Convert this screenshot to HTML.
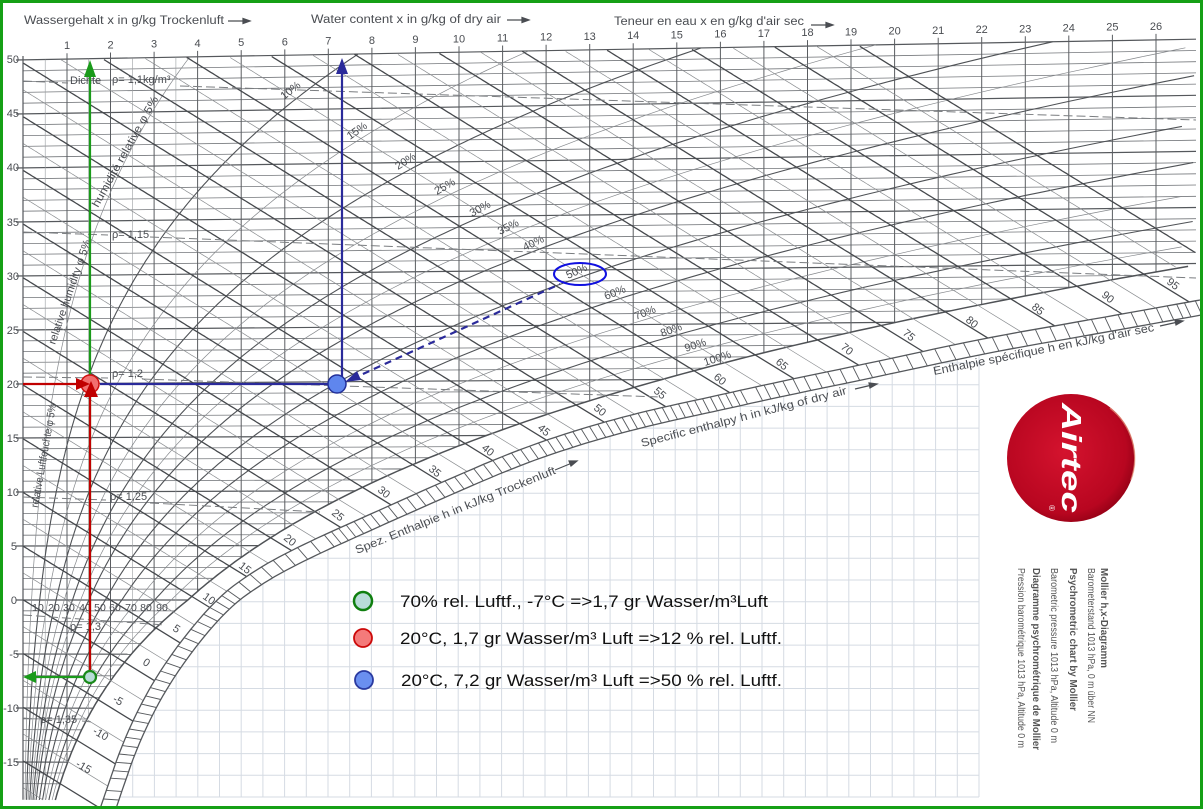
<!DOCTYPE html>
<html><head><meta charset="utf-8">
<style>
html,body{margin:0;padding:0;background:#fff;}
svg{display:block;}
.t{font-family:"Liberation Sans",sans-serif;fill:#4a4d52;}
.lg{font-family:"Liberation Sans",sans-serif;fill:#111;font-size:16.5px;}
</style></head><body>
<svg id="s" width="1203" height="809" viewBox="0 0 1203 809" xmlns="http://www.w3.org/2000/svg">
<defs>
<radialGradient id="rg" cx="0.45" cy="0.45" r="0.6">
<stop offset="0" stop-color="#d4132e"/><stop offset="0.8" stop-color="#b80620"/><stop offset="1" stop-color="#8e0014"/>
</radialGradient>
<clipPath id="gp"><polygon id="gpoly" points="0,0"/></clipPath>
</defs>
<rect x="0" y="0" width="1203" height="809" fill="#fff"/>
<g id="paper" clip-path="url(#gp)" stroke="#d5dbe3" stroke-width="1"></g>
<g id="grid" fill="none"></g>
<g id="band" fill="none" stroke="#55585c"></g>

<g stroke="#7a7d80" stroke-width="1" stroke-dasharray="9 4" fill="none">
<path d="M23,81 L68,83 M180,86 L1196,120"/>
<path d="M23,232 L108,235 M150,237 L1196,278"/>
<path d="M23,377 L108,378 M142,379 L660,397"/>
<path d="M23,497 L106,500 M150,503 L320,512"/>
<path d="M23,615 L165,625"/>
<path d="M23,718 L36,719 M82,721 L92,722"/>
</g>

<g class="t" font-size="11.5">
<text x="24" y="24" textLength="200" lengthAdjust="spacingAndGlyphs">Wassergehalt x in g/kg Trockenluft</text>
<text x="311" y="23" textLength="190" lengthAdjust="spacingAndGlyphs">Water content x in g/kg of dry air</text>
<text x="614" y="25" textLength="190" lengthAdjust="spacingAndGlyphs">Teneur en eau x en g/kg d'air sec</text>
</g>
<g stroke="#4a4d52" stroke-width="1.2" fill="#4a4d52">
<path d="M228,21 h18"/><polygon points="250,21 243,18.5 243,23.5"/>
<path d="M507,20 h18"/><polygon points="529,20 522,17.5 522,22.5"/>
<path d="M811,25 h18"/><polygon points="833,25 826,22.5 826,27.5"/>
</g>
<g class="t" font-size="11" text-anchor="middle" id="toplab"></g>
<g class="t" font-size="11" text-anchor="end">
<text x="19" y="63">50</text><text x="19" y="117">45</text><text x="19" y="171">40</text><text x="19" y="226">35</text>
<text x="19" y="280">30</text><text x="19" y="334">25</text><text x="19" y="388">20</text><text x="19" y="442">15</text>
<text x="19" y="496">10</text><text x="17" y="550">5</text><text x="17" y="604">0</text><text x="19" y="658">-5</text>
<text x="19" y="712">-10</text><text x="19" y="766">-15</text>
</g>

<g class="t" font-size="11">
<text x="70" y="84">Dichte</text><text x="112" y="83">ρ= 1,1kg/m³</text>
<text x="112" y="238">ρ= 1,15</text>
<text x="112" y="377">ρ= 1,2</text>
<text x="110" y="500">ρ= 1,25</text>
<text x="70" y="630">ρ= 1,3</text>
<text x="40" y="723">ρ= 1,35</text>
</g>
<g class="t" font-size="10.5" text-anchor="middle">
<text x="38" y="611">10</text><text x="54" y="611">20</text><text x="69" y="611">30</text><text x="85" y="611">40</text>
<text x="100" y="611">50</text><text x="115" y="611">60</text><text x="131" y="611">70</text><text x="146" y="611">80</text><text x="162" y="611">90</text>
</g>

<g class="t" font-size="11">
<text transform="translate(284,100) rotate(-38)">10%</text>
<text transform="translate(350,140) rotate(-35)">15%</text>
<text transform="translate(398,170) rotate(-32)">20%</text>
<text transform="translate(437,195) rotate(-30)">25%</text>
<text transform="translate(472,217) rotate(-28)">30%</text>
<text transform="translate(500,235) rotate(-27)">35%</text>
<text transform="translate(525,251) rotate(-26)">40%</text>
<text transform="translate(568,279) rotate(-24)">50%</text>
<text transform="translate(606,300) rotate(-22)">60%</text>
<text transform="translate(636,320) rotate(-21)">70%</text>
<text transform="translate(662,337) rotate(-20)">80%</text>
<text transform="translate(686,352) rotate(-19)">90%</text>
<text transform="translate(705,366) rotate(-18)">100%</text>
<text transform="translate(38,508) rotate(-80)" textLength="105" lengthAdjust="spacingAndGlyphs">relative Luftfeuchte φ 5%</text>
<text transform="translate(55,345) rotate(-71)" textLength="110" lengthAdjust="spacingAndGlyphs">relative humidity φ 5%</text>
<text transform="translate(98,208) rotate(-61)" textLength="125" lengthAdjust="spacingAndGlyphs">humidité relative φ 5%</text>
</g>

<g class="t" font-size="11">
<text transform="translate(1166,283) rotate(38)">95</text>
<text transform="translate(1101,296) rotate(40)">90</text>
<text transform="translate(1031,308) rotate(40)">85</text>
<text transform="translate(965,321) rotate(40)">80</text>
<text transform="translate(902,334) rotate(40)">75</text>
<text transform="translate(840,348) rotate(40)">70</text>
<text transform="translate(775,363) rotate(40)">65</text>
<text transform="translate(713,378) rotate(40)">60</text>
<text transform="translate(653,392) rotate(40)">55</text>
<text transform="translate(593,409) rotate(40)">50</text>
<text transform="translate(537,429) rotate(40)">45</text>
<text transform="translate(481,449) rotate(40)">40</text>
<text transform="translate(428,470) rotate(40)">35</text>
<text transform="translate(377,491) rotate(40)">30</text>
<text transform="translate(331,514) rotate(40)">25</text>
<text transform="translate(283,539) rotate(40)">20</text>
<text transform="translate(238,567) rotate(38)">15</text>
<text transform="translate(202,598) rotate(36)">10</text>
<text transform="translate(172,630) rotate(34)">5</text>
<text transform="translate(142,664) rotate(32)">0</text>
<text transform="translate(112,701) rotate(30)">-5</text>
<text transform="translate(92,733) rotate(30)">-10</text>
<text transform="translate(75,766) rotate(30)">-15</text>
</g>
<g class="t" font-size="11.5">
<text transform="translate(357,554) rotate(-22)" textLength="215" lengthAdjust="spacingAndGlyphs">Spez. Enthalpie h in kJ/kg Trockenluft</text>
<text transform="translate(642,447) rotate(-14.5)" textLength="212" lengthAdjust="spacingAndGlyphs">Specific enthalpy h in kJ/kg of dry air</text>
<text transform="translate(934,375) rotate(-11.3)" textLength="225" lengthAdjust="spacingAndGlyphs">Enthalpie spécifique h en kJ/kg d'air sec</text>
</g>
<g stroke="#4a4d52" stroke-width="1.2" fill="#4a4d52">
<path d="M555,470 L572,463" /><polygon points="577,461 569,461 571,466"/>
<path d="M855,389 L872,385"/><polygon points="877,384 869,383 870,388"/>
<path d="M1160,326 L1178,322"/><polygon points="1183,321 1175,320 1176,325"/>
</g>

<g stroke-width="2.2" fill="none">
<path d="M90,677 V74" stroke="#1a9a1a"/>
<path d="M90,677 H34" stroke="#1a9a1a"/>
<path d="M90,677 V396" stroke="#c00000"/>
<path d="M23,384 H78" stroke="#c00000"/>
<path d="M100,384 H330" stroke="#2a2a9a"/>
<path d="M342,384 V72" stroke="#2a2a9a"/>
<path d="M352,379 L560,284" stroke="#2a2a9a" stroke-dasharray="7 5"/>
<ellipse cx="580" cy="274" rx="26" ry="11" stroke="#1010e0" stroke-width="2"/>
</g>
<polygon points="90,60 84,77 96,77" fill="#1a9a1a"/>
<polygon points="23,677 36,671 36,683" fill="#1a9a1a"/>
<polygon points="342,58 336,74 348,74" fill="#2a2a9a"/>
<circle cx="90" cy="677" r="6" fill="#b8dcd8" stroke="#1a8a1a" stroke-width="2.2"/>
<circle cx="90" cy="384" r="9" fill="#f26f6f" stroke="#d01010" stroke-width="1.5"/>
<polygon points="91,381 84,397 98,397" fill="#c00000"/>
<polygon points="90,384 76,378 76,390" fill="#c00000"/>
<circle cx="337" cy="384" r="9" fill="#5f86ee" stroke="#23309a" stroke-width="1.5"/>
<polygon points="345,382 357,371 361,380" fill="#2a2a9a"/>

<circle cx="363" cy="601" r="9" fill="#b8dcd8" stroke="#0f7f0f" stroke-width="2.5"/>
<circle cx="363" cy="638" r="9" fill="#f47a7a" stroke="#cc0a0a" stroke-width="1.8"/>
<circle cx="364" cy="680" r="9" fill="#6a8ff0" stroke="#2a3aa0" stroke-width="1.8"/>
<text class="lg" x="400" y="607" textLength="368" lengthAdjust="spacingAndGlyphs">70% rel. Luftf., -7°C =&gt;1,7 gr Wasser/m³Luft</text>
<text class="lg" x="400" y="644" textLength="382" lengthAdjust="spacingAndGlyphs">20°C, 1,7 gr Wasser/m³ Luft =&gt;12 % rel. Luftf.</text>
<text class="lg" x="401" y="686" textLength="381" lengthAdjust="spacingAndGlyphs">20°C, 7,2 gr Wasser/m³ Luft =&gt;50 % rel. Luftf.</text>

<circle cx="1071" cy="458" r="64" fill="url(#rg)"/>
<path d="M1110,408 A64,64 0 0 1 1131,480" stroke="#f0b090" stroke-width="1.5" fill="none" opacity="0.6"/>
<text transform="translate(1062,403) rotate(90)" font-family="Liberation Sans,sans-serif" font-weight="bold" font-style="italic" font-size="28" fill="#fff" textLength="110" lengthAdjust="spacingAndGlyphs">Airtec</text>
<text transform="translate(1049,505) rotate(90)" font-family="Liberation Sans,sans-serif" font-size="8" fill="#fff">®</text>

<g font-family="Liberation Sans,sans-serif" font-size="10.5" fill="#555">
<text transform="translate(1101,568) rotate(90)" font-weight="bold" textLength="100" lengthAdjust="spacingAndGlyphs">Mollier h,x-Diagramm</text>
<text transform="translate(1088,568) rotate(90)" textLength="155" lengthAdjust="spacingAndGlyphs">Barometerstand 1013 hPa, 0 m über NN</text>
<text transform="translate(1070,568) rotate(90)" font-weight="bold" textLength="143" lengthAdjust="spacingAndGlyphs">Psychrometric chart by Mollier</text>
<text transform="translate(1051,568) rotate(90)" textLength="175" lengthAdjust="spacingAndGlyphs">Barometric pressure 1013 hPa, Altitude 0 m</text>
<text transform="translate(1033,568) rotate(90)" font-weight="bold" textLength="182" lengthAdjust="spacingAndGlyphs">Diagramme psychrométrique de Mollier</text>
<text transform="translate(1018,568) rotate(90)" textLength="180" lengthAdjust="spacingAndGlyphs">Pression barométrique 1013 hPa, Altitude 0 m</text>
</g>

<rect x="1.5" y="1.5" width="1200" height="806" fill="none" stroke="#15a015" stroke-width="3"/>
</svg>
<script>
(function(){
var NS="http://www.w3.org/2000/svg";
function el(p,tag,a){var e=document.createElementNS(NS,tag);for(var k in a)e.setAttribute(k,a[k]);p.appendChild(e);return e;}
var G=document.getElementById('grid'),B=document.getElementById('band'),P=document.getElementById('paper'),TL=document.getElementById('toplab');
function X(g){return 23.4+43.56*g;}
function Y(t,g){return 600-10.8*t-0.000354*t*(X(g)-23);}
function ps(t){return t>=0?610.94*Math.exp(17.625*t/(t+243.04)):611.2*Math.exp(22.46*t/(272.62+t));}
function xs(t,f){var p=f*ps(t);return 622*p/(101325-p);}
function tsat(g){var a=-40,b=60;for(var i=0;i<50;i++){var m=(a+b)/2;if(xs(m,1)<g)a=m;else b=m;}return (a+b)/2;}
function pl(pts,w,c){el(G,'polyline',{points:pts.map(function(p){return p[0].toFixed(1)+','+p[1].toFixed(1);}).join(' '),'stroke-width':w,stroke:c,fill:'none'});}
var XMAX=1196,GMAX=(XMAX-23.4)/43.56;
for(var t=-17;t<=50;t++){
  var gs=Math.min(xs(t,1),GMAX);
  var major=(t%5==0);
  pl([[major?16:23,Y(t,0)],[X(gs),Y(t,gs)]],major?1.2:0.8,major?'#55585c':'#74777b');
}
for(var g=0.5;g<=26.01;g+=0.5){
  var whole=Math.abs(g-Math.round(g))<0.01;
  if(!whole && g>4) continue;
  var ts=Math.max(tsat(g),-18.5);
  var y0=Y(50,g)-(whole?6:0),y1=Y(ts,g);
  pl([[X(g),y0],[X(g),y1]],whole?1:0.6,whole?'#5a5d61':'#9a9da0');
  if(whole){var e=el(TL,'text',{x:X(g).toFixed(1),y:(Y(50,g)-10).toFixed(1)});e.textContent=String(Math.round(g));}
}
pl([[23,Y(-18.5,0)],[23,Y(50,0)-4]],1.2,'#55585c');
var rh=[0.05,0.1,0.15,0.2,0.25,0.3,0.35,0.4,0.5,0.6,0.7,0.8,0.9,1.0];
rh.forEach(function(f){
  var pts=[];
  for(var t=-18.5;t<=50.001;t+=0.25){var g=xs(t,f);if(g>GMAX)break;pts.push([X(g),Y(t,g)]);}
  var maj=(f==0.1||f==0.2||f==0.3||f==0.4||f==0.5||f==0.6||f==0.8||f==1.0);
  pl(pts,f==1?1.5:(maj?1.1:0.7),maj?'#4f5256':'#85888c');
});
var inner=[[100,809],[103,800],[126,733],[161,667],[214,600],[258,568],[306,543],[364,517],[440,483],[517,450],[586,427],[650,410],[715,396],[773,383],[870,363],[985,338],[1100,318],[1200,300]];
function chaikin(a,n){for(var k=0;k<n;k++){var b=[a[0]];for(var i=0;i<a.length-1;i++){var p=a[i],q=a[i+1];b.push([0.75*p[0]+0.25*q[0],0.75*p[1]+0.25*q[1]]);b.push([0.25*p[0]+0.75*q[0],0.25*p[1]+0.75*q[1]]);}b.push(a[a.length-1]);a=b;}return a;}
inner=chaikin(inner,3);
var outer=[],W=15;
for(var i=0;i<inner.length;i++){var a=inner[Math.max(0,i-1)],b=inner[Math.min(inner.length-1,i+1)];var dx=b[0]-a[0],dy=b[1]-a[1],L=Math.hypot(dx,dy)||1;dx/=L;dy/=L;outer.push([inner[i][0]-dy*W,inner[i][1]+dx*W]);}
function bp(pts,w){el(B,'polyline',{points:pts.map(function(p){return p[0].toFixed(1)+','+p[1].toFixed(1);}).join(' '),'stroke-width':w});}
bp(inner,1.3);bp(outer,1.3);
var acc=0;
for(var i=1;i<inner.length;i++){var a=inner[i-1],b=inner[i];var dx=b[0]-a[0],dy=b[1]-a[1],L=Math.hypot(dx,dy);acc+=L;
  if(acc>=7.5){acc=0;var ux=dx/L,uy=dy/L;var o=outer[i];el(B,'line',{x1:b[0].toFixed(1),y1:b[1].toFixed(1),x2:(o[0]+ux*4).toFixed(1),y2:(o[1]+uy*4).toFixed(1),'stroke-width':0.9});}}
function segInt(p,d,a,b){var ex=b[0]-a[0],ey=b[1]-a[1];var den=d[0]*ey-d[1]*ex;if(Math.abs(den)<1e-9)return null;
  var s=((a[0]-p[0])*ey-(a[1]-p[1])*ex)/den;var u=((a[0]-p[0])*d[1]-(a[1]-p[1])*d[0])/den;if(s>0&&u>=0&&u<=1)return [p[0]+d[0]*s,p[1]+d[1]*s];return null;}
for(var h=-20;h<=100.01;h+=2.5){
  var maj=Math.abs(h/5-Math.round(h/5))<0.01;
  var pts=[],last=null,prev=null,sat=false;
  for(var g=0;g<=GMAX+0.001;g+=0.05){
    var t=(h-2.501*g)/(1.006+0.00186*g);
    if(t>50.0001)continue;
    if(t<-18.5&&g<1.2){break;}
    if(g>xs(t,1)){sat=true;break;}
    var p=[X(g),Y(t,g)];prev=last;last=p;pts.push(p);
  }
  if(pts.length<2)continue;
  if(sat&&prev){var d=[last[0]-prev[0],last[1]-prev[1]];var hit=null;
    for(var i=1;i<inner.length&&!hit;i++)hit=segInt(last,d,inner[i-1],inner[i]);
    if(hit)pts.push(hit);}
  pl(pts,maj?1.3:0.7,maj?'#45484c':'#8a8d90');
}
var poly=outer.slice();poly.push([1203,300],[1203,809],[0,809],[0,800]);
document.getElementById('gpoly').setAttribute('points',poly.map(function(p){return p[0].toFixed(1)+','+p[1].toFixed(1);}).join(' '));
for(var x=979;x>=100;x-=21.7)el(P,'line',{x1:x,y1:250,x2:x,y2:797});
for(var y=797;y>=250;y-=21.7)el(P,'line',{x1:100,y1:y,x2:979,y2:y});
})();
</script>
</body></html>
